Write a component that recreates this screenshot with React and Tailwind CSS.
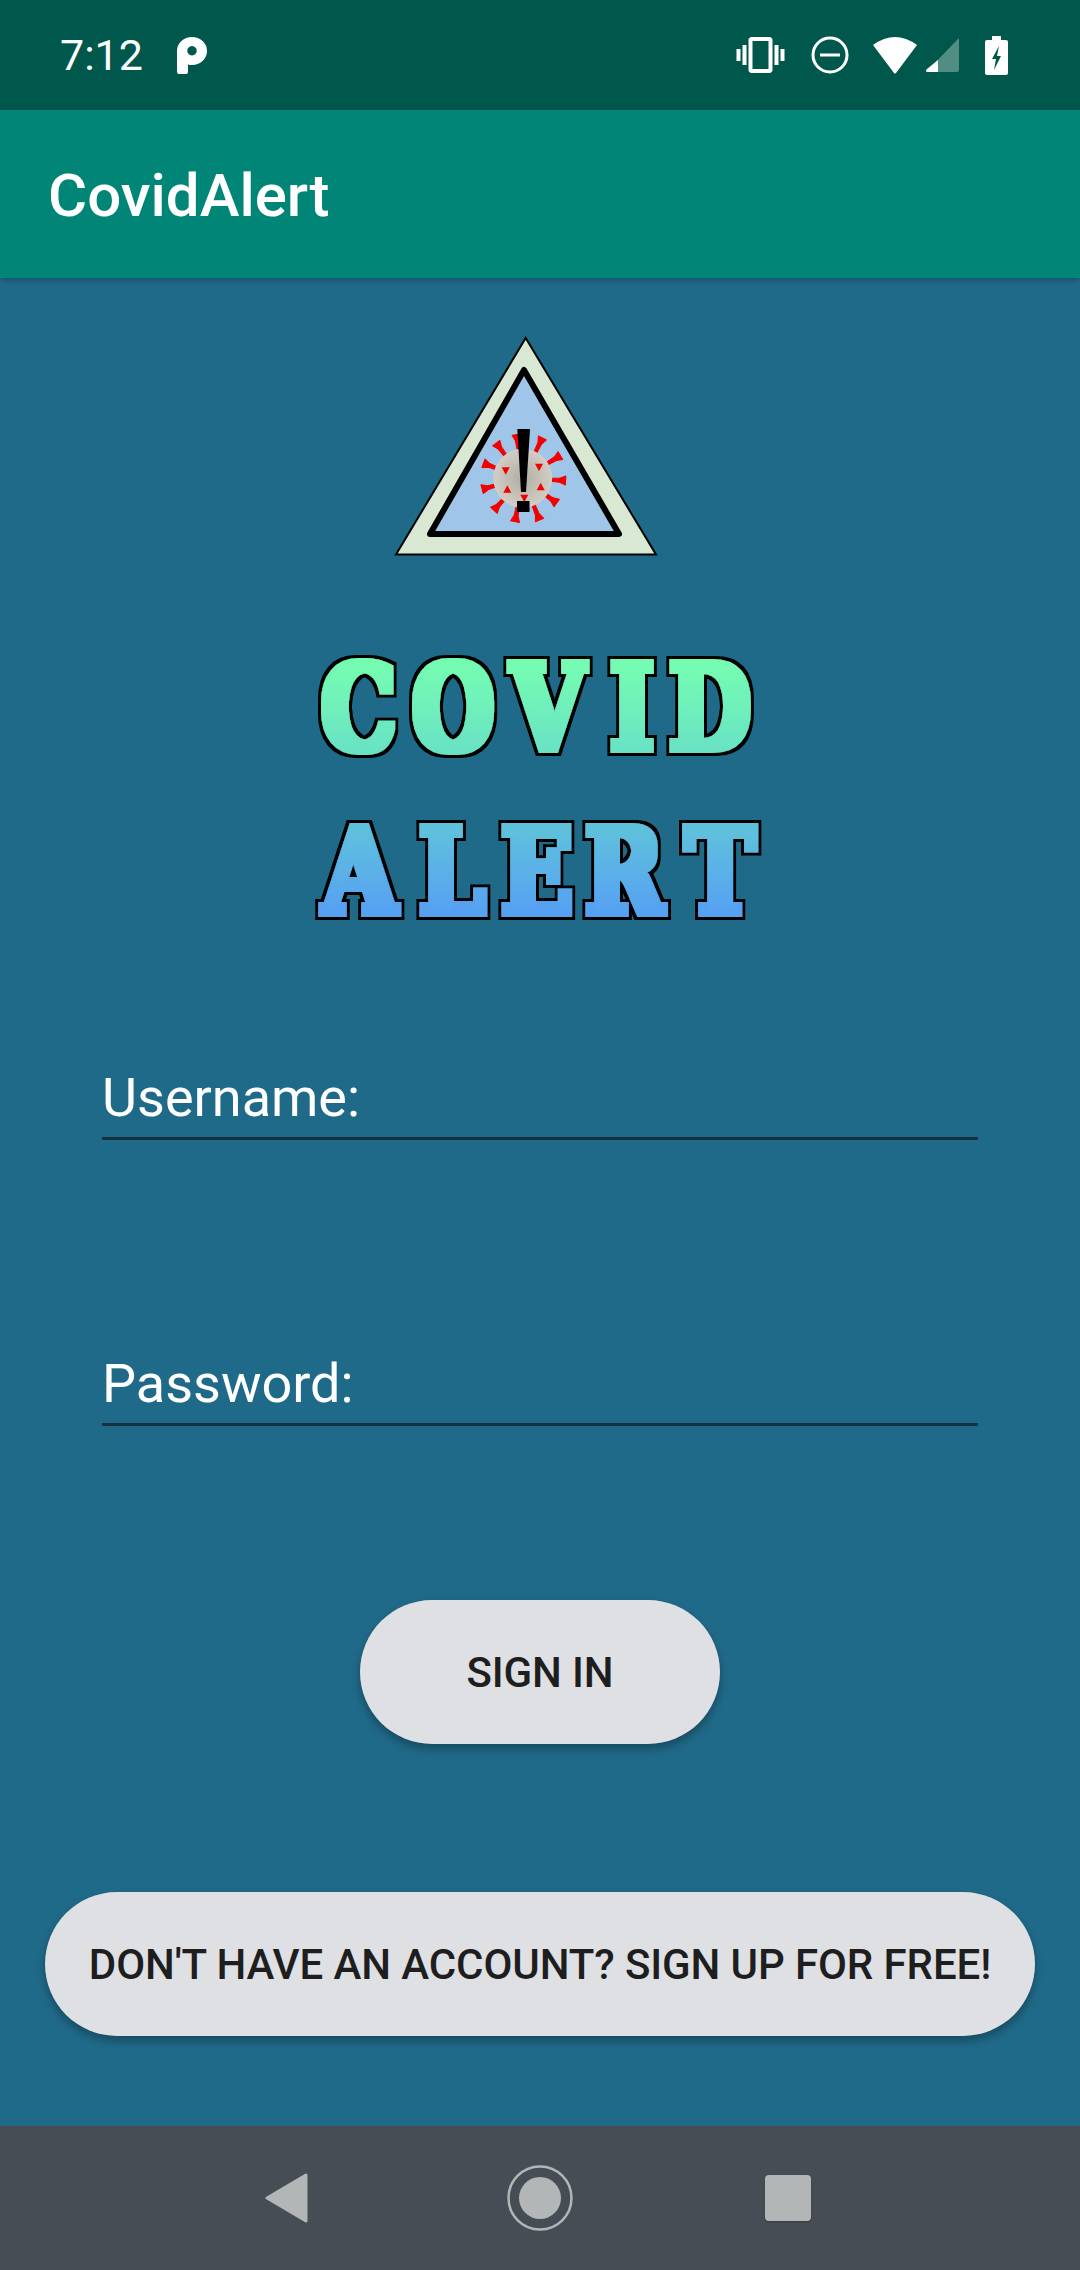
const roboto = { fontFamily: 'Roboto, sans-serif' };

function StatusIcons() {
  return (
    <div className="flex items-center">
      <svg width="49" height="36" viewBox="0 0 24 18" fill="#fff" className="mr-[26px]">
        <path d="M0 12h2V6H0v6zm3 2h2V4H3v10zm19-8v6h2V6h-2zm-3 8h2V4h-2v10zM16.5 0h-9C6.67 0 6 .67 6 1.500v15c0 .83.67 1.500 1.500 1.500h9c.83 0 1.500-.67 1.500-1.500v-15c0-.83-.67-1.500-1.500-1.500zM16 16H8V2h8v14z" />
      </svg>
      <svg width="38" height="38" viewBox="0 0 38 38" className="mr-[23px]">
        <circle cx="19" cy="19" r="17" fill="none" stroke="#fff" strokeWidth="3" />
        <rect x="9" y="17.500" width="20" height="3" fill="#fff" />
      </svg>
      <svg width="46" height="38" viewBox="0 0 46 38" className="mr-[8px]">
        <path d="M1 9 Q23 -7 45 9 L24 37 Q23 38 22 37 Z" fill="#fff" />
      </svg>
      <svg width="34" height="34" viewBox="0 0 34 34" className="mr-[25px]">
        <path d="M33 0 L33 32 Q33 34 31 34 L0 34 Z" fill="#fff" fillOpacity="0.32" />
        <path d="M12 22 L12 34 L1 34 Q-1 33 1 31 Z" fill="#fff" />
      </svg>
      <svg width="23" height="39" viewBox="0 0 23 39">
        <path
          fillRule="evenodd"
          fill="#fff"
          d="M7 0h9v4h5q2 0 2 2v31q0 2-2 2H2q-2 0-2-2V6q0-2 2-2h5zM14 10L7 23h4l-2 11 7-14h-4z"
        />
      </svg>
    </div>
  );
}

function StatusBar() {
  return (
    <div className="flex h-[110px] items-center justify-between bg-[#00574b] pl-[60px] pr-[72px] text-white">
      <div className="flex items-center">
        <span className="w-[117px] text-[43px] leading-none" style={roboto}>7:12</span>
        <svg width="30" height="37" viewBox="0 0 30 37">
          <path
            fillRule="evenodd"
            fill="#fff"
            d="M0 14A15 14 0 1 1 15 28Q12.500 28 11 27.500V35Q11 37 9 37H2Q0 37 0 35ZM15 9A4.700 4.700 0 1 0 15.010 9Z"
          />
        </svg>
      </div>
      <StatusIcons />
    </div>
  );
}

// measured off the logo: [angle, tip distance] from the virus centre
const SPIKES = [
  [-98, 44], [-127, 44], [-64, 45], [-31, 44], [3, 43], [36, 42],
  [68, 45], [100, 44], [132, 43], [165, 42], [-159, 42],
];
const BUMPS = [
  [111.7, 134.7, 1], [145, 131.3, 1], [146.7, 150.7, -1], [113.300, 153.300, -1], [130.300, 162.300, 1],
];

function Virus() {
  return (
    <g>
      {SPIKES.map(([deg, tip]) => (
        <path
          key={deg}
          d={`M28 -1.500 L${tip - 6} -2 L${tip} -4.500 L${tip} 4.500 L${tip - 6} 2 L28 1.500 Z`}
          fill="#f40000"
          stroke="#f40000"
          strokeWidth="1"
          strokeLinejoin="round"
          transform={`translate(128.700 142.300) rotate(${deg})`}
        />
      ))}
      <circle cx="128.700" cy="142.300" r="29.500" fill="url(#virus)" />
      {BUMPS.map(([x, y, dir]) => (
        <path key={x} d={`M${x - 4} ${y - 3.500 * dir} L${x + 4} ${y - 3.500 * dir} L${x} ${y + 4 * dir} Z`} fill="#f20000" />
      ))}
    </g>
  );
}

function TriangleLogo() {
  return (
    <svg width="264" height="222" viewBox="0 0 264 222" className="ml-[394px] self-start">
      <defs>
        <radialGradient id="virus">
          <stop offset="0" stopColor="#b0ada2" />
          <stop offset="1" stopColor="#d2cec6" />
        </radialGradient>
      </defs>
      <path d="M131.700 2 L262 218.500 L2 218.500 Z" fill="#d9e8d3" stroke="#000" strokeWidth="2" />
      <path d="M130 34 L225 198 L36 198 Z" fill="#9fc5e8" stroke="#000" strokeWidth="6" strokeLinejoin="round" />
      <Virus />
      <path d="M123.300 93 L136 93 L132 156 L127 156 Z" fill="#000" />
      <rect x="123" y="165" width="12.500" height="11" fill="#000" />
    </svg>
  );
}

function Word({ text, xs, y, fill }) {
  const sx = 0.8;
  return (
    <text
      x={xs.map((x) => (x / sx).toFixed(1)).join(' ')}
      y={y}
      transform={`scale(${sx} 1)`}
      fill={fill}
      filter="url(#fatOutline)"
      fontFamily='"DejaVu Serif", serif'
      fontWeight="700"
      fontSize="118"
    >
      {text}
    </text>
  );
}

function WordLogo() {
  return (
    <svg width="480" height="290" viewBox="300 640 480 290" className="ml-[300px] mt-[78px] self-start">
      <defs>
        <linearGradient id="covidFill" gradientUnits="userSpaceOnUse" x1="0" y1="655" x2="0" y2="758">
          <stop offset="0" stopColor="#76ffae" />
          <stop offset="1" stopColor="#68e0c4" />
        </linearGradient>
        <linearGradient id="alertFill" gradientUnits="userSpaceOnUse" x1="0" y1="820" x2="0" y2="920">
          <stop offset="0" stopColor="#5fc4d8" />
          <stop offset="1" stopColor="#569ef2" />
        </linearGradient>
        <filter id="fatOutline" filterUnits="userSpaceOnUse" x="0" y="600" width="1200" height="400">
          <feMorphology in="SourceGraphic" operator="dilate" radius="5 4" result="fat" />
          <feMorphology in="SourceAlpha" operator="dilate" radius="8.500 7" result="edge" />
          <feGaussianBlur in="edge" stdDeviation="0.500" result="soft" />
          <feMerge>
            <feMergeNode in="soft" />
            <feMergeNode in="fat" />
          </feMerge>
        </filter>
      </defs>
      <Word text="COVID" xs={[321, 412, 511, 610, 669]} y="753" fill="url(#covidFill)" />
      <Word text="ALERT" xs={[323, 419, 501, 585, 685]} y="917" fill="url(#alertFill)" />
    </svg>
  );
}

function Field({ label, className }) {
  return (
    <div className={`mx-[102px] flex h-[66px] items-end border-b-[3px] border-[#16303f] pb-[12px] ${className}`}>
      <span className="text-[54px] leading-none text-white" style={roboto}>{label}</span>
    </div>
  );
}

function PillButton({ children, className }) {
  return (
    <button
      className={`flex h-[144px] items-center justify-center rounded-[72px] bg-[#dfe0e4] text-[42px] font-medium tracking-[-0.1px] text-[#1e1e1e] shadow-[0_5px_10px_rgba(0,0,0,0.3)] ${className}`}
      style={roboto}
    >
      {children}
    </button>
  );
}

function NavBar() {
  return (
    <div className="flex h-[144px] items-center bg-[#464d54] pl-[264px]">
      <svg width="44" height="50" viewBox="0 0 44 50" className="mr-[199px]">
        <path d="M3 25 L42 2 L42 48 Z" fill="#b2b6b7" stroke="#b2b6b7" strokeWidth="3" strokeLinejoin="round" />
      </svg>
      <svg width="66" height="66" viewBox="0 0 66 66" className="mr-[192px]">
        <circle cx="33" cy="33" r="31.500" fill="none" stroke="#b2b6b7" strokeWidth="2.500" />
        <circle cx="33" cy="33" r="21" fill="#b2b6b7" />
      </svg>
      <div className="h-[46px] w-[46px] rounded-[4px] bg-[#b2b6b7] shadow-[0_1px_2px_rgba(0,0,0,0.25)]" />
    </div>
  );
}

export default function App() {
  return (
    <div className="flex h-[2270px] w-[1080px] flex-col overflow-hidden bg-[#206a89]">
      <StatusBar />
      <div className="z-10 flex h-[168px] items-center bg-[#008577] pl-[48px] shadow-[0_2px_6px_rgba(0,0,0,0.25)]">
        <h1 className="mt-[3px] text-[60px] font-medium leading-none text-white" style={roboto}>CovidAlert</h1>
      </div>
      <div className="flex flex-1 flex-col pt-[58px]">
        <TriangleLogo />
        <WordLogo />
        <Field label="Username:" className="mt-[148px]" />
        <Field label="Password:" className="mt-[220px]" />
        <PillButton className="mx-auto mt-[174px] w-[360px]">SIGN IN</PillButton>
        <PillButton className="mx-[45px] mt-[148px]">DON'T HAVE AN ACCOUNT? SIGN UP FOR FREE!</PillButton>
      </div>
      <NavBar />
    </div>
  );
}
